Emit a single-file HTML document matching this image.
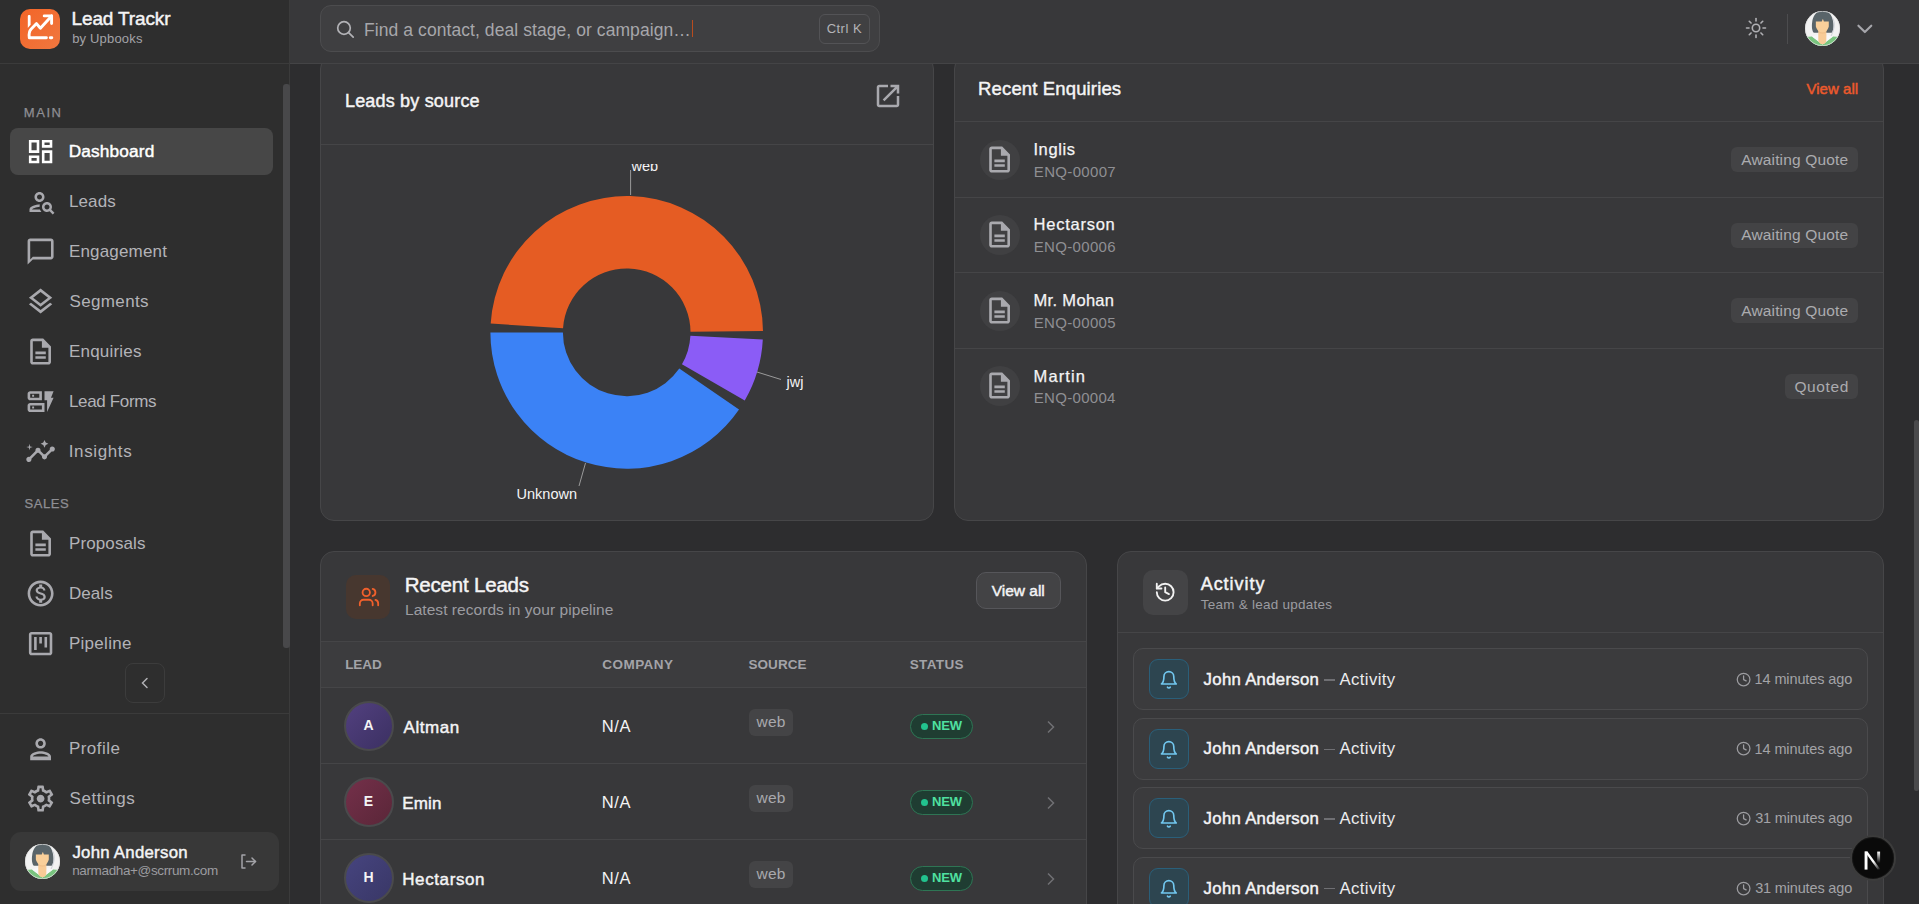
<!DOCTYPE html><html><head><meta charset="utf-8"><style>
html,body{margin:0;padding:0;width:1919px;height:904px;overflow:hidden;background:#2d2d2f;font-family:"Liberation Sans", sans-serif;}
.t{position:absolute;white-space:pre;}
svg{display:block;}
</style></head><body>
<div style="position:absolute;left:320px;top:55px;width:614px;height:466px;box-sizing:border-box;background:#38383a;border:1px solid #464648;border-radius:14px;"></div>
<div class="t" style="left:344.94px;top:92.00px;font-size:18px;line-height:18px;color:#f4f4f5;font-weight:400;letter-spacing:0.183px;-webkit-text-stroke:0.45px #f4f4f5;">Leads by source</div>
<svg style="position:absolute;left:872.5px;top:81.0px;" width="30.0" height="30.0" viewBox="0 0 24 24"><path fill="#a9a9ae" d="M19 19H5V5h7V3H5c-1.11 0-2 .9-2 2v14c0 1.1.89 2 2 2h14c1.1 0 2-.9 2-2v-7h-2v7zM14 3v2h3.59l-9.83 9.83 1.41 1.41L19 6.41V10h2V3h-7z"/></svg>
<div style="position:absolute;left:321px;top:144px;width:612px;height:1px;background:#454547;"></div>
<div style="position:absolute;left:321px;top:164px;width:612px;height:356px;overflow:hidden;"><svg width="1919" height="904" style="position:absolute;left:-321px;top:-164px;"><path fill="#e55c23" d="M762.99,330.97 A136.3,136.3 0 0 0 490.68,323.60 L563.03,328.28 A63.8,63.8 0 0 1 690.50,331.73 Z"/><path fill="#3b82f6" d="M490.40,332.40 A136.3,136.3 0 0 0 739.03,409.60 L679.28,368.54 A63.8,63.8 0 0 1 562.90,332.40 Z"/><path fill="#8b5cf6" d="M744.74,400.55 A136.3,136.3 0 0 0 762.81,339.53 L690.41,335.74 A63.8,63.8 0 0 1 681.95,364.30 Z"/><line x1="630.6" y1="195" x2="630.6" y2="170" stroke="#9a9a9a" stroke-width="1"/><line x1="757" y1="372" x2="781" y2="379.5" stroke="#9a9a9a" stroke-width="1"/><line x1="585.5" y1="463" x2="579" y2="486" stroke="#9a9a9a" stroke-width="1"/><text x="631.5" y="171" fill="#f4f4f5" font-family="Liberation Sans" font-size="14.5">web</text><text x="786.5" y="387" fill="#f4f4f5" font-family="Liberation Sans" font-size="14.5">jwj</text><text x="577" y="499" fill="#f4f4f5" font-family="Liberation Sans" font-size="14.5" text-anchor="end">Unknown</text></svg></div>
<div style="position:absolute;left:954px;top:55px;width:930px;height:466px;box-sizing:border-box;background:#38383a;border:1px solid #464648;border-radius:14px;"></div>
<div class="t" style="left:978.09px;top:80.00px;font-size:18.5px;line-height:18.5px;color:#f4f4f5;font-weight:400;letter-spacing:0.140px;-webkit-text-stroke:0.45px #f4f4f5;">Recent Enquiries</div>
<div class="t" style="left:1806.48px;top:81.00px;font-size:15px;line-height:15px;color:#ee5a2c;font-weight:400;letter-spacing:0.038px;-webkit-text-stroke:0.45px #ee5a2c;">View all</div>
<div style="position:absolute;left:955px;top:121px;width:928px;height:1px;background:#454547;"></div>
<div style="position:absolute;left:955px;top:197px;width:928px;height:1px;background:#454547;"></div>
<div style="position:absolute;left:980px;top:139.5px;width:40px;height:40px;border-radius:50%;background:#404042;"></div>
<svg style="position:absolute;left:984.4px;top:143.9px;" width="31.200000000000003" height="31.200000000000003" viewBox="0 0 24 24"><path fill="#a9a9ae" d="M8 15.5h8v2H8zm0-3.5h8v2H8zm6-10H6c-1.1 0-2 .9-2 2v16c0 1.1.89 2 2 2h12c1.1 0 2-.9 2-2V8l-6-6zm4 18H6V4h7v5h5v11z"/></svg>
<div class="t" style="left:1033.39px;top:141.00px;font-size:16.5px;line-height:16.5px;color:#f4f4f5;font-weight:400;letter-spacing:0.642px;-webkit-text-stroke:0.25px #f4f4f5;">Inglis</div>
<div class="t" style="left:1033.80px;top:164.00px;font-size:15px;line-height:15px;color:#8f8f93;font-weight:400;letter-spacing:0.335px;">ENQ-00007</div>
<div style="position:absolute;left:1731px;top:147.0px;width:127px;height:25px;border-radius:6px;background:#434345;"></div>
<div class="t" style="left:1741.20px;top:152.00px;font-size:15.5px;line-height:15.5px;color:#ababaf;font-weight:400;letter-spacing:0.156px;">Awaiting Quote</div>
<div style="position:absolute;left:955px;top:272px;width:928px;height:1px;background:#454547;"></div>
<div style="position:absolute;left:980px;top:215.0px;width:40px;height:40px;border-radius:50%;background:#404042;"></div>
<svg style="position:absolute;left:984.4px;top:219.4px;" width="31.200000000000003" height="31.200000000000003" viewBox="0 0 24 24"><path fill="#a9a9ae" d="M8 15.5h8v2H8zm0-3.5h8v2H8zm6-10H6c-1.1 0-2 .9-2 2v16c0 1.1.89 2 2 2h12c1.1 0 2-.9 2-2V8l-6-6zm4 18H6V4h7v5h5v11z"/></svg>
<div class="t" style="left:1033.56px;top:216.00px;font-size:16.5px;line-height:16.5px;color:#f4f4f5;font-weight:400;letter-spacing:0.749px;-webkit-text-stroke:0.25px #f4f4f5;">Hectarson</div>
<div class="t" style="left:1033.80px;top:239.00px;font-size:15px;line-height:15px;color:#8f8f93;font-weight:400;letter-spacing:0.316px;">ENQ-00006</div>
<div style="position:absolute;left:1731px;top:222.5px;width:127px;height:25px;border-radius:6px;background:#434345;"></div>
<div class="t" style="left:1741.20px;top:227.00px;font-size:15.5px;line-height:15.5px;color:#ababaf;font-weight:400;letter-spacing:0.156px;">Awaiting Quote</div>
<div style="position:absolute;left:955px;top:348px;width:928px;height:1px;background:#454547;"></div>
<div style="position:absolute;left:980px;top:290.5px;width:40px;height:40px;border-radius:50%;background:#404042;"></div>
<svg style="position:absolute;left:984.4px;top:294.9px;" width="31.200000000000003" height="31.200000000000003" viewBox="0 0 24 24"><path fill="#a9a9ae" d="M8 15.5h8v2H8zm0-3.5h8v2H8zm6-10H6c-1.1 0-2 .9-2 2v16c0 1.1.89 2 2 2h12c1.1 0 2-.9 2-2V8l-6-6zm4 18H6V4h7v5h5v11z"/></svg>
<div class="t" style="left:1033.56px;top:292.00px;font-size:16.5px;line-height:16.5px;color:#f4f4f5;font-weight:400;letter-spacing:0.319px;-webkit-text-stroke:0.25px #f4f4f5;">Mr. Mohan</div>
<div class="t" style="left:1033.80px;top:315.00px;font-size:15px;line-height:15px;color:#8f8f93;font-weight:400;letter-spacing:0.316px;">ENQ-00005</div>
<div style="position:absolute;left:1731px;top:298.0px;width:127px;height:25px;border-radius:6px;background:#434345;"></div>
<div class="t" style="left:1741.20px;top:303.00px;font-size:15.5px;line-height:15.5px;color:#ababaf;font-weight:400;letter-spacing:0.156px;">Awaiting Quote</div>
<div style="position:absolute;left:980px;top:366.0px;width:40px;height:40px;border-radius:50%;background:#404042;"></div>
<svg style="position:absolute;left:984.4px;top:370.4px;" width="31.200000000000003" height="31.200000000000003" viewBox="0 0 24 24"><path fill="#a9a9ae" d="M8 15.5h8v2H8zm0-3.5h8v2H8zm6-10H6c-1.1 0-2 .9-2 2v16c0 1.1.89 2 2 2h12c1.1 0 2-.9 2-2V8l-6-6zm4 18H6V4h7v5h5v11z"/></svg>
<div class="t" style="left:1033.56px;top:368.00px;font-size:16.5px;line-height:16.5px;color:#f4f4f5;font-weight:400;letter-spacing:1.131px;-webkit-text-stroke:0.25px #f4f4f5;">Martin</div>
<div class="t" style="left:1033.80px;top:390.00px;font-size:15px;line-height:15px;color:#8f8f93;font-weight:400;letter-spacing:0.298px;">ENQ-00004</div>
<div style="position:absolute;left:1785px;top:373.5px;width:73px;height:25px;border-radius:6px;background:#434345;"></div>
<div class="t" style="left:1794.38px;top:379.00px;font-size:15.5px;line-height:15.5px;color:#ababaf;font-weight:400;letter-spacing:0.629px;">Quoted</div>
<div style="position:absolute;left:320px;top:551px;width:767px;height:400px;box-sizing:border-box;background:#38383a;border:1px solid #464648;border-radius:14px;"></div>
<div style="position:absolute;left:346px;top:575px;width:44px;height:44px;border-radius:10px;background:#47372f;"></div>
<svg style="position:absolute;left:358.1px;top:585.8px;" width="22" height="22" viewBox="0 0 24 24"><g fill="none" stroke="#f0602c" stroke-width="2" stroke-linecap="round" stroke-linejoin="round"><path d="M16 21v-2a4 4 0 0 0-4-4H6a4 4 0 0 0-4 4v2"/><circle cx="9" cy="7" r="4"/><path d="M22 21v-2a4 4 0 0 0-3-3.87"/><path d="M16 3.13a4 4 0 0 1 0 7.75"/></g></svg>
<div class="t" style="left:404.74px;top:575.00px;font-size:20.5px;line-height:20.5px;color:#f4f4f5;font-weight:400;letter-spacing:-0.200px;-webkit-text-stroke:0.45px #f4f4f5;">Recent Leads</div>
<div class="t" style="left:404.96px;top:602.00px;font-size:15.5px;line-height:15.5px;color:#9c9ca1;font-weight:400;letter-spacing:0.054px;">Latest records in your pipeline</div>
<div style="position:absolute;left:976px;top:572px;width:85px;height:37px;box-sizing:border-box;border-radius:10px;background:#434345;border:1px solid #56565a;"></div>
<div class="t" style="left:991.77px;top:583.00px;font-size:15.5px;line-height:15.5px;color:#f4f4f5;font-weight:400;letter-spacing:-0.017px;-webkit-text-stroke:0.45px #f4f4f5;">View all</div>
<div style="position:absolute;left:321px;top:641px;width:765px;height:1px;background:#454547;"></div>
<div style="position:absolute;left:321px;top:642px;width:765px;height:45px;background:#3c3c3e;"></div>
<div style="position:absolute;left:321px;top:687px;width:765px;height:1px;background:#454547;"></div>
<div class="t" style="left:345.19px;top:658.00px;font-size:13.5px;line-height:13.5px;color:#a3a3a8;font-weight:700;letter-spacing:-0.068px;">LEAD</div>
<div class="t" style="left:602.36px;top:658.00px;font-size:13.5px;line-height:13.5px;color:#a3a3a8;font-weight:700;letter-spacing:0.439px;">COMPANY</div>
<div class="t" style="left:748.53px;top:658.00px;font-size:13.5px;line-height:13.5px;color:#a3a3a8;font-weight:700;letter-spacing:0.042px;">SOURCE</div>
<div class="t" style="left:909.73px;top:658.00px;font-size:13.5px;line-height:13.5px;color:#a3a3a8;font-weight:700;letter-spacing:0.355px;">STATUS</div>
<div style="position:absolute;left:321px;top:763px;width:765px;height:1px;background:#454547;"></div>
<div style="position:absolute;left:343.5px;top:700.5px;width:50px;height:50px;box-sizing:border-box;border-radius:50%;background:linear-gradient(135deg,#52407f,#3b3062);border:2.5px solid #4a4a4c;"></div>
<div class="t" style="left:68.50px;width:600px;text-align:center;top:718.00px;font-size:14px;line-height:14px;color:#f4f4f5;font-weight:700;">A</div>
<div class="t" style="left:403.57px;top:719.00px;font-size:17px;line-height:17px;color:#f4f4f5;font-weight:400;letter-spacing:0.559px;-webkit-text-stroke:0.45px #f4f4f5;">Altman</div>
<div class="t" style="left:601.68px;top:718.00px;font-size:16.5px;line-height:16.5px;color:#f4f4f5;font-weight:400;letter-spacing:0.683px;">N/A</div>
<div style="position:absolute;left:749px;top:709.2px;width:44px;height:27px;border-radius:6px;background:#444446;"></div>
<div class="t" style="left:756.45px;top:714.00px;font-size:15.5px;line-height:15.5px;color:#a9a9ad;font-weight:400;letter-spacing:0.286px;">web</div>
<div style="position:absolute;left:910px;top:714.0px;width:63px;height:25px;box-sizing:border-box;border-radius:13px;background:#1f3d32;border:1px solid #2e7554;"></div>
<div style="position:absolute;left:921.1px;top:723.0px;width:7px;height:7px;border-radius:50%;background:#22c38e;"></div>
<div class="t" style="left:932.12px;top:719.00px;font-size:13px;line-height:13px;color:#4fe0a0;font-weight:700;letter-spacing:-0.265px;">NEW</div>
<svg style="position:absolute;left:1046px;top:719.5px;" width="10" height="14" viewBox="0 0 10 14"><path d="M2 1.5 L7.5 7 L2 12.5" fill="none" stroke="#707074" stroke-width="1.5"/></svg>
<div style="position:absolute;left:321px;top:839px;width:765px;height:1px;background:#454547;"></div>
<div style="position:absolute;left:343.5px;top:776.5px;width:50px;height:50px;box-sizing:border-box;border-radius:50%;background:linear-gradient(135deg,#74304a,#5a2638);border:2.5px solid #4a4a4c;"></div>
<div class="t" style="left:68.50px;width:600px;text-align:center;top:794.00px;font-size:14px;line-height:14px;color:#f4f4f5;font-weight:700;">E</div>
<div class="t" style="left:402.21px;top:795.00px;font-size:17px;line-height:17px;color:#f4f4f5;font-weight:400;letter-spacing:0.178px;-webkit-text-stroke:0.45px #f4f4f5;">Emin</div>
<div class="t" style="left:601.68px;top:794.00px;font-size:16.5px;line-height:16.5px;color:#f4f4f5;font-weight:400;letter-spacing:0.683px;">N/A</div>
<div style="position:absolute;left:749px;top:785.2px;width:44px;height:27px;border-radius:6px;background:#444446;"></div>
<div class="t" style="left:756.45px;top:790.00px;font-size:15.5px;line-height:15.5px;color:#a9a9ad;font-weight:400;letter-spacing:0.286px;">web</div>
<div style="position:absolute;left:910px;top:790.0px;width:63px;height:25px;box-sizing:border-box;border-radius:13px;background:#1f3d32;border:1px solid #2e7554;"></div>
<div style="position:absolute;left:921.1px;top:799.0px;width:7px;height:7px;border-radius:50%;background:#22c38e;"></div>
<div class="t" style="left:932.12px;top:795.00px;font-size:13px;line-height:13px;color:#4fe0a0;font-weight:700;letter-spacing:-0.265px;">NEW</div>
<svg style="position:absolute;left:1046px;top:795.5px;" width="10" height="14" viewBox="0 0 10 14"><path d="M2 1.5 L7.5 7 L2 12.5" fill="none" stroke="#707074" stroke-width="1.5"/></svg>
<div style="position:absolute;left:343.5px;top:852.5px;width:50px;height:50px;box-sizing:border-box;border-radius:50%;background:linear-gradient(135deg,#46447f,#393766);border:2.5px solid #4a4a4c;"></div>
<div class="t" style="left:68.50px;width:600px;text-align:center;top:870.00px;font-size:14px;line-height:14px;color:#f4f4f5;font-weight:700;">H</div>
<div class="t" style="left:402.21px;top:871.00px;font-size:17px;line-height:17px;color:#f4f4f5;font-weight:400;letter-spacing:0.611px;-webkit-text-stroke:0.45px #f4f4f5;">Hectarson</div>
<div class="t" style="left:601.68px;top:870.00px;font-size:16.5px;line-height:16.5px;color:#f4f4f5;font-weight:400;letter-spacing:0.683px;">N/A</div>
<div style="position:absolute;left:749px;top:861.2px;width:44px;height:27px;border-radius:6px;background:#444446;"></div>
<div class="t" style="left:756.45px;top:866.00px;font-size:15.5px;line-height:15.5px;color:#a9a9ad;font-weight:400;letter-spacing:0.286px;">web</div>
<div style="position:absolute;left:910px;top:866.0px;width:63px;height:25px;box-sizing:border-box;border-radius:13px;background:#1f3d32;border:1px solid #2e7554;"></div>
<div style="position:absolute;left:921.1px;top:875.0px;width:7px;height:7px;border-radius:50%;background:#22c38e;"></div>
<div class="t" style="left:932.12px;top:871.00px;font-size:13px;line-height:13px;color:#4fe0a0;font-weight:700;letter-spacing:-0.265px;">NEW</div>
<svg style="position:absolute;left:1046px;top:871.5px;" width="10" height="14" viewBox="0 0 10 14"><path d="M2 1.5 L7.5 7 L2 12.5" fill="none" stroke="#707074" stroke-width="1.5"/></svg>
<div style="position:absolute;left:1117px;top:551px;width:767px;height:400px;box-sizing:border-box;background:#38383a;border:1px solid #464648;border-radius:14px;"></div>
<div style="position:absolute;left:1143px;top:570px;width:45px;height:45px;border-radius:10px;background:#444446;"></div>
<svg style="position:absolute;left:1154.3999999999999px;top:580.5999999999999px;" width="22.4" height="22.4" viewBox="0 0 24 24"><g fill="none" stroke="#f2f2f2" stroke-width="2" stroke-linecap="round" stroke-linejoin="round"><path d="M3 12a9 9 0 1 0 9-9 9.75 9.75 0 0 0-6.74 2.74L3 8"/><path d="M3 3v5h5"/><path d="M12 7v5l4 2"/></g></svg>
<div class="t" style="left:1200.68px;top:575.00px;font-size:18px;line-height:18px;color:#f4f4f5;font-weight:400;letter-spacing:0.963px;-webkit-text-stroke:0.45px #f4f4f5;">Activity</div>
<div class="t" style="left:1200.73px;top:598.00px;font-size:13.5px;line-height:13.5px;color:#9c9ca1;font-weight:400;letter-spacing:0.241px;">Team &amp; lead updates</div>
<div style="position:absolute;left:1118px;top:632px;width:765px;height:1px;background:#454547;"></div>
<div style="position:absolute;left:1133px;top:648.0px;width:735px;height:62px;box-sizing:border-box;border-radius:10px;background:#3b3b3d;border:1px solid #4a4a4c;"></div>
<div style="position:absolute;left:1149px;top:659.0px;width:40px;height:40px;box-sizing:border-box;border-radius:9px;background:#2d4550;border:1px solid #2a5f7a;"></div>
<svg style="position:absolute;left:1158.95px;top:669.9499999999999px;" width="19.7" height="19.7" viewBox="0 0 24 24"><g fill="none" stroke="#72c8f0" stroke-width="2" stroke-linecap="round" stroke-linejoin="round"><path d="M6 8a6 6 0 0 1 12 0c0 7 3 9 3 9H3s3-2 3-9"/><path d="M10.3 21a1.94 1.94 0 0 0 3.4 0"/></g></svg>
<div class="t" style="left:1203.61px;top:672.00px;font-size:16.75px;line-height:16.75px;color:#f4f4f5;font-weight:400;letter-spacing:0.298px;-webkit-text-stroke:0.45px #f4f4f5;">John Anderson</div>
<div style="position:absolute;left:1324px;top:679.0px;width:10.5px;height:1.5px;background:#6f6f73;"></div>
<div class="t" style="left:1339.50px;top:672.00px;font-size:16.75px;line-height:16.75px;color:#ececee;font-weight:400;letter-spacing:0.379px;">Activity</div>
<svg style="position:absolute;left:1735.9px;top:671.6999999999999px;" width="15.2" height="15.2" viewBox="0 0 24 24"><g fill="none" stroke="#9c9ca0" stroke-width="2" stroke-linecap="round" stroke-linejoin="round"><circle cx="12" cy="12" r="10"/><polyline points="12 6 12 12 16 14"/></g></svg>
<div class="t" style="left:1754.58px;top:672.00px;font-size:14.5px;line-height:14.5px;color:#a3a3a7;font-weight:400;letter-spacing:-0.116px;">14 minutes ago</div>
<div style="position:absolute;left:1133px;top:717.6px;width:735px;height:62px;box-sizing:border-box;border-radius:10px;background:#3b3b3d;border:1px solid #4a4a4c;"></div>
<div style="position:absolute;left:1149px;top:728.6px;width:40px;height:40px;box-sizing:border-box;border-radius:9px;background:#2d4550;border:1px solid #2a5f7a;"></div>
<svg style="position:absolute;left:1158.95px;top:739.55px;" width="19.7" height="19.7" viewBox="0 0 24 24"><g fill="none" stroke="#72c8f0" stroke-width="2" stroke-linecap="round" stroke-linejoin="round"><path d="M6 8a6 6 0 0 1 12 0c0 7 3 9 3 9H3s3-2 3-9"/><path d="M10.3 21a1.94 1.94 0 0 0 3.4 0"/></g></svg>
<div class="t" style="left:1203.61px;top:741.00px;font-size:16.75px;line-height:16.75px;color:#f4f4f5;font-weight:400;letter-spacing:0.298px;-webkit-text-stroke:0.45px #f4f4f5;">John Anderson</div>
<div style="position:absolute;left:1324px;top:748.6px;width:10.5px;height:1.5px;background:#6f6f73;"></div>
<div class="t" style="left:1339.50px;top:741.00px;font-size:16.75px;line-height:16.75px;color:#ececee;font-weight:400;letter-spacing:0.379px;">Activity</div>
<svg style="position:absolute;left:1735.9px;top:741.3px;" width="15.2" height="15.2" viewBox="0 0 24 24"><g fill="none" stroke="#9c9ca0" stroke-width="2" stroke-linecap="round" stroke-linejoin="round"><circle cx="12" cy="12" r="10"/><polyline points="12 6 12 12 16 14"/></g></svg>
<div class="t" style="left:1754.58px;top:742.00px;font-size:14.5px;line-height:14.5px;color:#a3a3a7;font-weight:400;letter-spacing:-0.116px;">14 minutes ago</div>
<div style="position:absolute;left:1133px;top:787.2px;width:735px;height:62px;box-sizing:border-box;border-radius:10px;background:#3b3b3d;border:1px solid #4a4a4c;"></div>
<div style="position:absolute;left:1149px;top:798.2px;width:40px;height:40px;box-sizing:border-box;border-radius:9px;background:#2d4550;border:1px solid #2a5f7a;"></div>
<svg style="position:absolute;left:1158.95px;top:809.15px;" width="19.7" height="19.7" viewBox="0 0 24 24"><g fill="none" stroke="#72c8f0" stroke-width="2" stroke-linecap="round" stroke-linejoin="round"><path d="M6 8a6 6 0 0 1 12 0c0 7 3 9 3 9H3s3-2 3-9"/><path d="M10.3 21a1.94 1.94 0 0 0 3.4 0"/></g></svg>
<div class="t" style="left:1203.61px;top:811.00px;font-size:16.75px;line-height:16.75px;color:#f4f4f5;font-weight:400;letter-spacing:0.298px;-webkit-text-stroke:0.45px #f4f4f5;">John Anderson</div>
<div style="position:absolute;left:1324px;top:818.2px;width:10.5px;height:1.5px;background:#6f6f73;"></div>
<div class="t" style="left:1339.50px;top:811.00px;font-size:16.75px;line-height:16.75px;color:#ececee;font-weight:400;letter-spacing:0.379px;">Activity</div>
<svg style="position:absolute;left:1735.9px;top:810.9px;" width="15.2" height="15.2" viewBox="0 0 24 24"><g fill="none" stroke="#9c9ca0" stroke-width="2" stroke-linecap="round" stroke-linejoin="round"><circle cx="12" cy="12" r="10"/><polyline points="12 6 12 12 16 14"/></g></svg>
<div class="t" style="left:1755.16px;top:811.00px;font-size:14.5px;line-height:14.5px;color:#a3a3a7;font-weight:400;letter-spacing:-0.161px;">31 minutes ago</div>
<div style="position:absolute;left:1133px;top:856.8px;width:735px;height:62px;box-sizing:border-box;border-radius:10px;background:#3b3b3d;border:1px solid #4a4a4c;"></div>
<div style="position:absolute;left:1149px;top:867.8px;width:40px;height:40px;box-sizing:border-box;border-radius:9px;background:#2d4550;border:1px solid #2a5f7a;"></div>
<svg style="position:absolute;left:1158.95px;top:878.7499999999999px;" width="19.7" height="19.7" viewBox="0 0 24 24"><g fill="none" stroke="#72c8f0" stroke-width="2" stroke-linecap="round" stroke-linejoin="round"><path d="M6 8a6 6 0 0 1 12 0c0 7 3 9 3 9H3s3-2 3-9"/><path d="M10.3 21a1.94 1.94 0 0 0 3.4 0"/></g></svg>
<div class="t" style="left:1203.61px;top:881.00px;font-size:16.75px;line-height:16.75px;color:#f4f4f5;font-weight:400;letter-spacing:0.298px;-webkit-text-stroke:0.45px #f4f4f5;">John Anderson</div>
<div style="position:absolute;left:1324px;top:887.8px;width:10.5px;height:1.5px;background:#6f6f73;"></div>
<div class="t" style="left:1339.50px;top:881.00px;font-size:16.75px;line-height:16.75px;color:#ececee;font-weight:400;letter-spacing:0.379px;">Activity</div>
<svg style="position:absolute;left:1735.9px;top:880.4999999999999px;" width="15.2" height="15.2" viewBox="0 0 24 24"><g fill="none" stroke="#9c9ca0" stroke-width="2" stroke-linecap="round" stroke-linejoin="round"><circle cx="12" cy="12" r="10"/><polyline points="12 6 12 12 16 14"/></g></svg>
<div class="t" style="left:1755.16px;top:881.00px;font-size:14.5px;line-height:14.5px;color:#a3a3a7;font-weight:400;letter-spacing:-0.161px;">31 minutes ago</div>
<div style="position:absolute;left:1913.6px;top:420px;width:5.4px;height:371px;border-radius:3px;background:#4a4a4c;"></div>
<div style="position:absolute;left:290px;top:0px;width:1629px;height:63px;background:#38383a;"></div>
<div style="position:absolute;left:290px;top:63px;width:1629px;height:1px;background:#444446;"></div>
<div style="position:absolute;left:320px;top:5px;width:560px;height:47px;box-sizing:border-box;border-radius:11px;background:#3f3f41;border:1px solid #4c4c4e;"></div>
<svg style="position:absolute;left:336px;top:20px;" width="19" height="19" viewBox="0 0 19 19"><g fill="none" stroke="#b2b2b6" stroke-width="1.7" stroke-linecap="round"><circle cx="8" cy="8" r="6.3"/><path d="M12.6 12.6l4.6 4.6"/></g></svg>
<div class="t" style="left:364.10px;top:22.00px;font-size:17.5px;line-height:17.5px;color:#a7a7ab;font-weight:400;letter-spacing:0.070px;">Find a contact, deal stage, or campaign…</div>
<div style="position:absolute;left:692px;top:19.5px;width:1.2px;height:17.5px;background:#b84c1e;"></div>
<div style="position:absolute;left:819px;top:14px;width:51px;height:30px;box-sizing:border-box;border-radius:6px;border:1px solid #535356;background:#404042;"></div>
<div class="t" style="left:826.65px;top:22.00px;font-size:13px;line-height:13px;color:#b4b4b8;font-weight:400;letter-spacing:0.488px;">Ctrl K</div>
<svg style="position:absolute;left:1745.1px;top:17.1px;" width="22" height="22" viewBox="0 0 22 22"><g stroke="#b0b0b4" stroke-width="1.6" stroke-linecap="round" fill="none"><circle cx="11" cy="11" r="3.7"/><line x1="18.00" y1="11.00" x2="20.50" y2="11.00"/><line x1="15.95" y1="15.95" x2="17.72" y2="17.72"/><line x1="11.00" y1="18.00" x2="11.00" y2="20.50"/><line x1="6.05" y1="15.95" x2="4.28" y2="17.72"/><line x1="4.00" y1="11.00" x2="1.50" y2="11.00"/><line x1="6.05" y1="6.05" x2="4.28" y2="4.28"/><line x1="11.00" y1="4.00" x2="11.00" y2="1.50"/><line x1="15.95" y1="6.05" x2="17.72" y2="4.28"/></g></svg>
<div style="position:absolute;left:1786.5px;top:14px;width:1px;height:29.5px;background:#4c4c4e;"></div>
<svg style="position:absolute;left:1805.0px;top:11.0px;" width="35" height="35" viewBox="0 0 100 100"><defs><clipPath id="c1822"><circle cx="50" cy="50" r="50"/></clipPath></defs><g clip-path="url(#c1822)"><rect width="100" height="100" fill="#f2f2f2"/><path d="M25 62 C19 56 19 42 20.5 32 C23 10 36 -2 51 -2 C66 -2 78 10 80.5 32 C82 42 82 56 76 62 Z" fill="#596469"/><path d="M78 18 C86 30 86 50 74 72" fill="none" stroke="#c9ced6" stroke-width="2.5"/><path d="M0 100 V74 L20 73 L50 96 L80 73 L100 74 V100Z" fill="#79c47f"/><path d="M20 73 L36 68 L50 96Z M80 73 L64 68 L50 96Z" fill="#f7f7f9"/><path d="M38 52 H61 V82 C61 90 56 95 50 95 C44 95 38 90 38 82Z" fill="#f8cb96"/><path d="M31 30 H48 L51 22 L54 30 H68 V44 C66 52 60 60 54 61 H46 C40 60 33 52 31 44Z" fill="#f9cf9a"/><path d="M40 60 C45 64 55 64 60 60" fill="none" stroke="#e6b27c" stroke-width="1.5"/></g><circle cx="50" cy="50" r="49" fill="none" stroke="#dedede" stroke-width="2"/></svg>
<svg style="position:absolute;left:1851.9px;top:15.65px;" width="25.7" height="25.7" viewBox="0 0 24 24"><g fill="none" stroke="#a6a6ab" stroke-width="2" stroke-linecap="round" stroke-linejoin="round"><path d="m6 9 6 6 6-6"/></g></svg>
<div style="position:absolute;left:0px;top:0px;width:289px;height:904px;background:#2e2e2e;"></div>
<div style="position:absolute;left:289px;top:0px;width:1px;height:904px;background:#3b3b3b;"></div>
<div style="position:absolute;left:0px;top:63px;width:289px;height:1px;background:#3b3b3b;"></div>
<div style="position:absolute;left:20px;top:9px;width:40px;height:39.5px;border-radius:10px;background:linear-gradient(135deg,#f36528,#f0773f);"></div>
<svg style="position:absolute;left:20px;top:9px;" width="40" height="40" viewBox="0 0 40 40"><g fill="none" stroke="#fff" stroke-width="2.9" stroke-linecap="round" stroke-linejoin="round"><path d="M31.6 6.9 L20.4 19.2 L16.5 14.6 L11 20.2 C8.6 22.8 8.9 26 9.3 28.8 H26.4"/><path d="M24.2 6.9 H31.6 V14.6"/><path d="M30.3 28.8 H31.8"/></g><path d="M7.8 7.4 C7.8 6.5 8.4 6.1 9.2 6.1 C10 6.1 10.6 6.5 10.6 7.4 V15.8 L7.8 18.9 Z" fill="#fff"/></svg>
<div class="t" style="left:71.56px;top:9.00px;font-size:19px;line-height:19px;color:#f4f4f5;font-weight:400;letter-spacing:-0.135px;-webkit-text-stroke:0.45px #f4f4f5;">Lead Trackr</div>
<div class="t" style="left:72.22px;top:32.00px;font-size:13px;line-height:13px;color:#a3a3a8;font-weight:400;letter-spacing:0.169px;">by Upbooks</div>
<div style="position:absolute;left:283px;top:84px;width:6.5px;height:564px;border-radius:3px;background:#48484a;"></div>
<div class="t" style="left:23.84px;top:106.00px;font-size:13px;line-height:13px;color:#8f8f94;font-weight:400;letter-spacing:1.543px;-webkit-text-stroke:0.25px #8f8f94;">MAIN</div>
<div style="position:absolute;left:10px;top:128px;width:263px;height:47px;border-radius:8px;background:#474747;"></div>
<svg style="position:absolute;left:25.0px;top:135.9px;" width="31.200000000000003" height="31.200000000000003" viewBox="0 0 24 24"><path fill="#ffffff" d="M19 5v2h-4V5h4M9 5v6H5V5h4m10 8v6h-4v-6h4M9 17v2H5v-2h4M21 3h-8v6h8V3zM11 3H3v10h8V3zm10 8h-8v10h8V11zm-10 4H3v6h8v-6z"/></svg>
<div class="t" style="left:68.70px;top:143.00px;font-size:17.25px;line-height:17.25px;color:#ffffff;font-weight:400;letter-spacing:0.151px;-webkit-text-stroke:0.45px #ffffff;">Dashboard</div>
<svg style="position:absolute;left:26.800000000000004px;top:186.7px;" width="30.0" height="30.0" viewBox="0 0 24 24"><path fill="#a9a9ae" d="M10 12c2.21 0 4-1.79 4-4s-1.79-4-4-4-4 1.79-4 4 1.79 4 4 4zm0-6c1.1 0 2 .9 2 2s-.9 2-2 2-2-.9-2-2 .9-2 2-2zM4 18c.22-.72 3.31-2 6-2 0-.7.13-1.37.35-1.99C7.62 13.91 2 15.27 2 18v2h9.54c-.52-.58-.93-1.25-1.19-2H4zm15.43.02c.36-.59.57-1.28.57-2.02 0-2.21-1.79-4-4-4s-4 1.79-4 4 1.79 4 4 4c.74 0 1.43-.22 2.02-.57L20.59 22 22 20.59c-1.5-1.5-.79-.8-2.57-2.57zM16 18c-1.1 0-2-.9-2-2s.9-2 2-2 2 .9 2 2-.9 2-2 2z"/></svg>
<div class="t" style="left:68.94px;top:193.00px;font-size:17px;line-height:17px;color:#b3b3b8;font-weight:400;letter-spacing:0.113px;">Leads</div>
<svg style="position:absolute;left:25.0px;top:235.9px;" width="31.200000000000003" height="31.200000000000003" viewBox="0 0 24 24"><path fill="#a9a9ae" d="M20 2H4c-1.1 0-2 .9-2 2v18l4-4h14c1.1 0 2-.9 2-2V4c0-1.1-.9-2-2-2zm0 14H6l-2 2V4h16v12z"/></svg>
<div class="t" style="left:68.94px;top:243.00px;font-size:17px;line-height:17px;color:#b3b3b8;font-weight:400;letter-spacing:0.169px;">Engagement</div>
<svg style="position:absolute;left:25.0px;top:285.9px;" width="31.200000000000003" height="31.200000000000003" viewBox="0 0 24 24"><path fill="#a9a9ae" d="M11.99 18.54l-7.37-5.73L3 14.07l9 7 9-7-1.63-1.27zM12 16l7.36-5.73L21 9l-9-7-9 7 1.63 1.27L12 16zm0-11.47L17.74 9 12 13.47 6.26 9 12 4.53z"/></svg>
<div class="t" style="left:69.62px;top:293.00px;font-size:17px;line-height:17px;color:#b3b3b8;font-weight:400;letter-spacing:0.335px;">Segments</div>
<svg style="position:absolute;left:25.0px;top:335.9px;" width="31.200000000000003" height="31.200000000000003" viewBox="0 0 24 24"><path fill="#a9a9ae" d="M8 15.5h8v2H8zm0-3.5h8v2H8zm6-10H6c-1.1 0-2 .9-2 2v16c0 1.1.89 2 2 2h12c1.1 0 2-.9 2-2V8l-6-6zm4 18H6V4h7v5h5v11z"/></svg>
<div class="t" style="left:68.94px;top:343.00px;font-size:17px;line-height:17px;color:#b3b3b8;font-weight:400;letter-spacing:0.200px;">Enquiries</div>
<svg style="position:absolute;left:25.0px;top:385.9px;" width="31.200000000000003" height="31.200000000000003" viewBox="0 0 24 24"><path fill="#a9a9ae" d="M17 20v-9h-2V4h7l-2 5h2l-5 11zm-2-7v7H4c-1.1 0-2-.9-2-2v-3c0-1.1.9-2 2-2h11zm-2 2H4v3h9v-3zm0-11v7H4c-1.1 0-2-.9-2-2V6c0-1.1.9-2 2-2h9zm-2 2H4v3h7V6zM5.5 17.25h1.5v-1.5H5.5v1.5zm0-9h1.5v-1.5H5.5v1.5z"/></svg>
<div class="t" style="left:68.94px;top:393.00px;font-size:17px;line-height:17px;color:#b3b3b8;font-weight:400;letter-spacing:-0.337px;">Lead Forms</div>
<svg style="position:absolute;left:25.0px;top:435.9px;" width="31.200000000000003" height="31.200000000000003" viewBox="0 0 24 24"><path fill="#a9a9ae" d="M21 8c-1.45 0-2.26 1.44-1.93 2.51l-3.55 3.56c-.3-.09-.74-.09-1.04 0l-2.55-2.55C12.27 10.45 11.46 9 10 9c-1.45 0-2.27 1.44-1.93 2.52l-4.56 4.55C2.44 15.74 1 16.55 1 18c0 1.1.9 2 2 2 1.45 0 2.26-1.44 1.93-2.51l4.55-4.56c.3.09.74.09 1.04 0l2.55 2.55C12.73 16.55 13.54 18 15 18c1.45 0 2.27-1.44 1.93-2.52l3.56-3.55c1.07.33 2.51-.48 2.51-1.93 0-1.1-.9-2-2-2zM15 9l.94-2.07L18 6l-2.06-.93L15 3l-.92 2.07L12 6l2.08.93zM3.5 11L4 9l2-.5L4 8l-.5-2L3 8l-2 .5L3 9z"/></svg>
<div class="t" style="left:68.77px;top:443.00px;font-size:17px;line-height:17px;color:#b3b3b8;font-weight:400;letter-spacing:0.622px;">Insights</div>
<div class="t" style="left:24.55px;top:497.00px;font-size:13px;line-height:13px;color:#8f8f94;font-weight:400;letter-spacing:0.534px;-webkit-text-stroke:0.25px #8f8f94;">SALES</div>
<svg style="position:absolute;left:25.0px;top:527.9px;" width="31.200000000000003" height="31.200000000000003" viewBox="0 0 24 24"><path fill="#a9a9ae" d="M8 15.5h8v2H8zm0-3.5h8v2H8zm6-10H6c-1.1 0-2 .9-2 2v16c0 1.1.89 2 2 2h12c1.1 0 2-.9 2-2V8l-6-6zm4 18H6V4h7v5h5v11z"/></svg>
<div class="t" style="left:68.94px;top:535.00px;font-size:17px;line-height:17px;color:#b3b3b8;font-weight:400;letter-spacing:0.122px;">Proposals</div>
<svg style="position:absolute;left:25.0px;top:577.9px;" width="31.200000000000003" height="31.200000000000003" viewBox="0 0 24 24"><path fill="#a9a9ae" d="M12 2C6.48 2 2 6.48 2 12s4.48 10 10 10 10-4.48 10-10S17.52 2 12 2zm0 18c-4.41 0-8-3.59-8-8s3.59-8 8-8 8 3.59 8 8-3.59 8-8 8zm.31-8.86c-1.77-.45-2.34-.94-2.34-1.67 0-.84.79-1.43 2.1-1.43 1.38 0 1.9.66 1.94 1.64h1.71c-.05-1.34-.87-2.57-2.49-2.97V5H10.9v1.69c-1.51.32-2.72 1.3-2.72 2.81 0 1.79 1.49 2.69 3.66 3.21 1.95.46 2.34 1.15 2.34 1.87 0 .53-.39 1.39-2.1 1.39-1.6 0-2.23-.72-2.32-1.64H8.04c.1 1.7 1.36 2.66 2.86 2.97V19h2.34v-1.67c1.52-.29 2.72-1.16 2.73-2.77-.01-2.2-1.9-2.96-3.66-3.42z"/></svg>
<div class="t" style="left:68.94px;top:585.00px;font-size:17px;line-height:17px;color:#b3b3b8;font-weight:400;letter-spacing:0.077px;">Deals</div>
<svg style="position:absolute;left:25.0px;top:627.9px;" width="31.200000000000003" height="31.200000000000003" viewBox="0 0 24 24"><path fill="#a9a9ae" d="M19 3H5c-1.1 0-2 .9-2 2v14c0 1.1.9 2 2 2h14c1.1 0 2-.9 2-2V5c0-1.1-.9-2-2-2zm0 16H5V5h14v14zM7 7h2v10H7zm4 0h2v5h-2zm4 0h2v8h-2z"/></svg>
<div class="t" style="left:68.94px;top:635.00px;font-size:17px;line-height:17px;color:#b3b3b8;font-weight:400;letter-spacing:0.284px;">Pipeline</div>
<div style="position:absolute;left:125px;top:663px;width:40px;height:40px;box-sizing:border-box;border-radius:8px;border:1px solid #3c3c3c;"></div>
<svg style="position:absolute;left:140px;top:677px;" width="10" height="12" viewBox="0 0 10 12"><path d="M7 1.5 L2.5 6 L7 10.5" fill="none" stroke="#b0b0b4" stroke-width="1.5" stroke-linecap="round"/></svg>
<div style="position:absolute;left:0px;top:713px;width:289px;height:1px;background:#3b3b3b;"></div>
<svg style="position:absolute;left:25.0px;top:732.9px;" width="31.200000000000003" height="31.200000000000003" viewBox="0 0 24 24"><path fill="#a9a9ae" d="M12 6c1.1 0 2 .9 2 2s-.9 2-2 2-2-.9-2-2 .9-2 2-2m0 10c2.7 0 5.8 1.29 6 2H6c.23-.72 3.31-2 6-2m0-12C9.79 4 8 5.79 8 8s1.79 4 4 4 4-1.79 4-4-1.79-4-4-4zm0 10c-2.67 0-8 1.34-8 4v3h16v-3c0-2.66-5.33-4-8-4z"/></svg>
<div class="t" style="left:68.94px;top:740.00px;font-size:17px;line-height:17px;color:#b3b3b8;font-weight:400;letter-spacing:0.465px;">Profile</div>
<svg style="position:absolute;left:25.0px;top:782.9px;" width="31.200000000000003" height="31.200000000000003" viewBox="0 0 24 24"><path fill="#a9a9ae" d="M19.43 12.98c.04-.32.07-.64.07-.98 0-.34-.03-.66-.07-.98l2.11-1.65c.19-.15.24-.42.12-.64l-2-3.46c-.09-.16-.26-.25-.44-.25-.06 0-.12.01-.17.03l-2.49 1c-.52-.4-1.08-.73-1.69-.98l-.38-2.65C14.46 2.18 14.25 2 14 2h-4c-.25 0-.46.18-.49.42l-.38 2.65c-.61.25-1.17.59-1.69.98l-2.49-1c-.06-.02-.12-.03-.18-.03-.17 0-.34.09-.43.25l-2 3.46c-.13.22-.07.49.12.64l2.11 1.65c-.04.32-.07.65-.07.98 0 .33.03.66.07.98l-2.11 1.65c-.19.15-.24.42-.12.64l2 3.46c.09.16.26.25.44.25.06 0 .12-.01.17-.03l2.49-1c.52.4 1.08.73 1.69.98l.38 2.65c.03.24.24.42.49.42h4c.25 0 .46-.18.49-.42l.38-2.65c.61-.25 1.17-.59 1.69-.98l2.49 1c.06.02.12.03.18.03.17 0 .34-.09.43-.25l2-3.46c.12-.22.07-.49-.12-.64l-2.11-1.65zm-1.98-1.71c.04.31.05.52.05.73 0 .21-.02.43-.05.73l-.14 1.13.89.7 1.08.84-.7 1.21-1.27-.51-1.04-.42-.9.68c-.43.32-.84.56-1.250.73l-1.06.43-.16 1.13-.2 1.35h-1.4l-.19-1.35-.16-1.13-1.06-.43c-.43-.18-.83-.41-1.23-.71l-.91-.7-1.06.43-1.27.51-.7-1.21 1.08-.84.89-.7-.14-1.13c-.03-.31-.05-.54-.05-.74s.02-.43.05-.73l.14-1.13-.89-.7-1.08-.84.7-1.21 1.27.51 1.04.42.9-.68c.43-.32.84-.56 1.25-.73l1.06-.43.16-1.13.2-1.35h1.39l.19 1.35.16 1.13 1.06.43c.43.18.83.41 1.23.71l.91.7 1.06-.43 1.27-.51.7 1.21-1.07.85-.89.7.14 1.13zM12 9a3 3 0 1 0 0.001 0z"/></svg>
<div class="t" style="left:69.62px;top:790.00px;font-size:17px;line-height:17px;color:#b3b3b8;font-weight:400;letter-spacing:0.523px;">Settings</div>
<div style="position:absolute;left:10px;top:832px;width:269px;height:59px;border-radius:11px;background:#383838;"></div>
<svg style="position:absolute;left:25.0px;top:844.0px;" width="35" height="35" viewBox="0 0 100 100"><defs><clipPath id="c42"><circle cx="50" cy="50" r="50"/></clipPath></defs><g clip-path="url(#c42)"><rect width="100" height="100" fill="#f2f2f2"/><path d="M25 62 C19 56 19 42 20.5 32 C23 10 36 -2 51 -2 C66 -2 78 10 80.5 32 C82 42 82 56 76 62 Z" fill="#596469"/><path d="M78 18 C86 30 86 50 74 72" fill="none" stroke="#c9ced6" stroke-width="2.5"/><path d="M0 100 V74 L20 73 L50 96 L80 73 L100 74 V100Z" fill="#79c47f"/><path d="M20 73 L36 68 L50 96Z M80 73 L64 68 L50 96Z" fill="#f7f7f9"/><path d="M38 52 H61 V82 C61 90 56 95 50 95 C44 95 38 90 38 82Z" fill="#f8cb96"/><path d="M31 30 H48 L51 22 L54 30 H68 V44 C66 52 60 60 54 61 H46 C40 60 33 52 31 44Z" fill="#f9cf9a"/><path d="M40 60 C45 64 55 64 60 60" fill="none" stroke="#e6b27c" stroke-width="1.5"/></g><circle cx="50" cy="50" r="49" fill="none" stroke="#dedede" stroke-width="2"/></svg>
<div class="t" style="left:72.41px;top:845.00px;font-size:16.75px;line-height:16.75px;color:#f4f4f5;font-weight:400;letter-spacing:0.282px;-webkit-text-stroke:0.45px #f4f4f5;">John Anderson</div>
<div class="t" style="left:72.19px;top:864.00px;font-size:13.5px;line-height:13.5px;color:#9c9ca0;font-weight:400;letter-spacing:-0.364px;">narmadha+@scrrum.com</div>
<svg style="position:absolute;left:239px;top:853px;" width="18" height="17" viewBox="0 0 18 17"><g fill="none" stroke="#a3a3a8" stroke-width="1.5" stroke-linecap="round" stroke-linejoin="round"><path d="M6 2H3v13h3"/><path d="M7.5 8.5h9"/><path d="M13 5l3.5 3.5L13 12"/></g></svg>
<div style="position:absolute;left:1849.5px;top:835px;width:46px;height:46px;box-sizing:border-box;border-radius:50%;background:#0a0a0a;border:2.5px solid #3c3c3c;box-shadow:inset 0 0 0 1px #161616;"></div>
<svg style="position:absolute;left:1862px;top:847px;" width="21" height="23" viewBox="0 0 21 23"><defs><linearGradient id="ng1" x1="0" y1="0" x2="1" y2="1"><stop offset="0.55" stop-color="#fff"/><stop offset="1" stop-color="#fff" stop-opacity="0"/></linearGradient><linearGradient id="ng2" x1="0" y1="0" x2="0" y2="1"><stop offset="0" stop-color="#fff"/><stop offset="1" stop-color="#fff" stop-opacity="0"/></linearGradient></defs><path d="M2.6 4.6h2.9v18h-2.9z" fill="#fff"/><path d="M2.6 4.6h2.9l13 17.8h-2.9z" fill="url(#ng1)"/><path d="M15.2 4.6h2.9v11.5h-2.9z" fill="url(#ng2)"/></svg>
</body></html>
